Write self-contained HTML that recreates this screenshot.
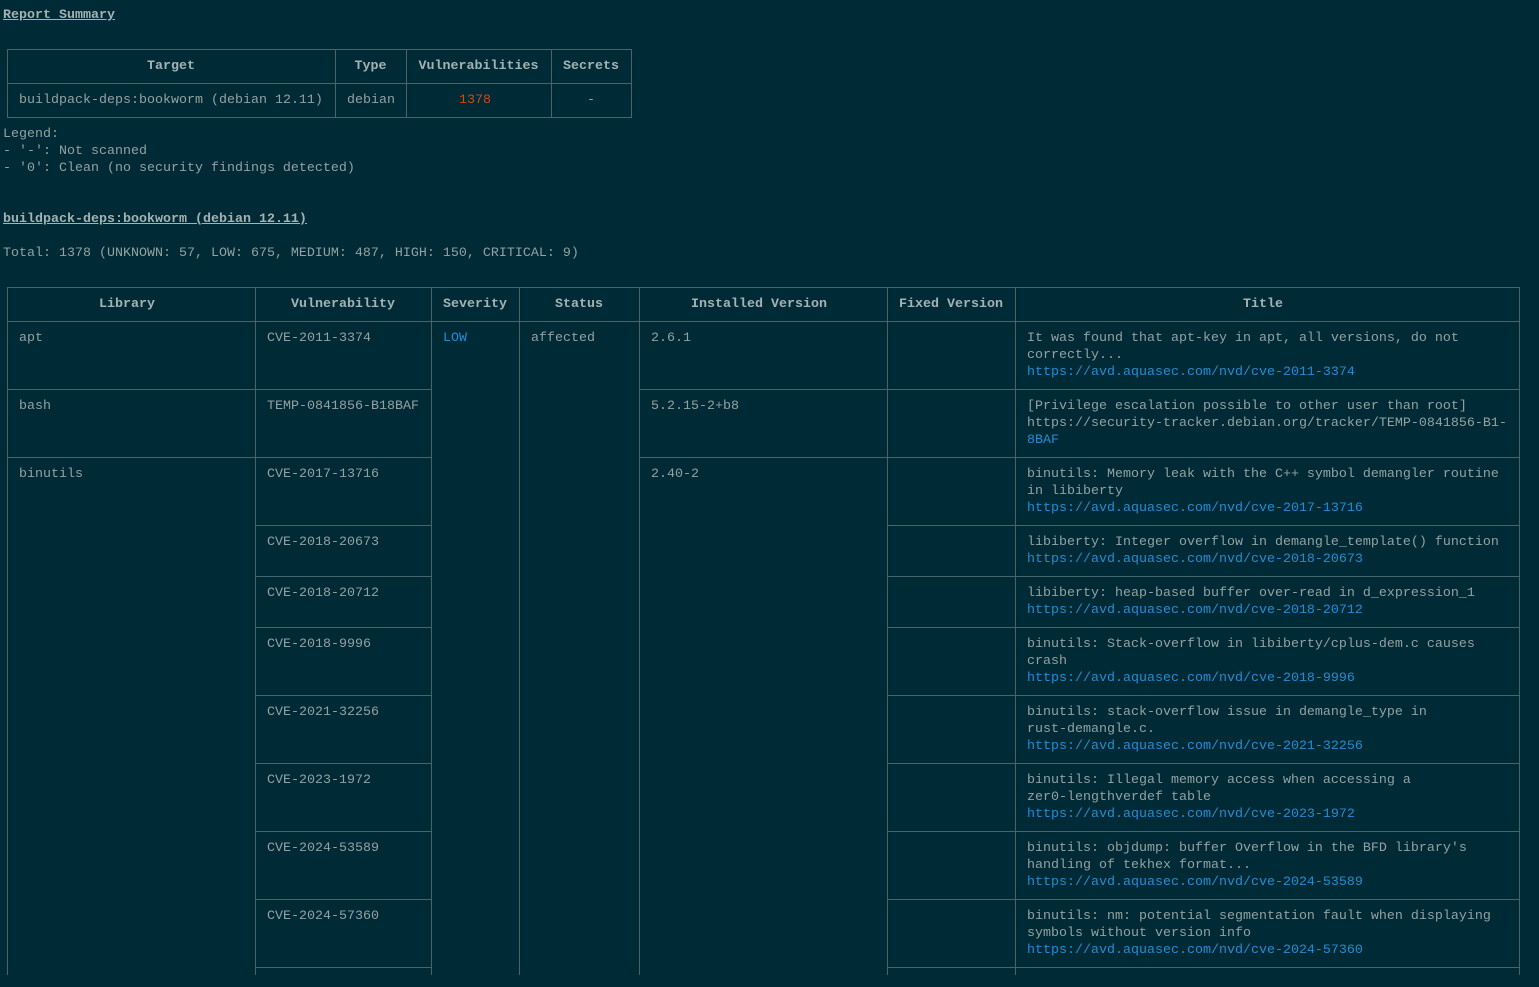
<!DOCTYPE html>
<html><head><meta charset="utf-8"><style>
html,body{margin:0;padding:0;background:#002b36;}
body{width:1539px;height:987px;position:relative;overflow:hidden;font-family:"Liberation Mono","DejaVu Sans Mono",monospace;font-size:13.33px;color:#93a1a1;}
.t{position:absolute;line-height:17px;white-space:pre;}
.b{font-weight:bold;color:#a3b3b3;}
.u{text-decoration:underline;}
.c{text-align:center;}
.l{color:#268bd2;}
.o{color:#cb4b16;}
.v{position:absolute;width:1px;background:#46666d;}
.h{position:absolute;height:1px;background:#46666d;}
</style></head><body>
<div class="t b u" style="left:3px;top:7px">Report Summary</div>

<div class="h" style="left:7px;top:49px;width:625px"></div>
<div class="h" style="left:7px;top:83px;width:625px"></div>
<div class="h" style="left:7px;top:117px;width:625px"></div>
<div class="v" style="left:7px;top:49px;height:69px"></div>
<div class="v" style="left:335px;top:49px;height:69px"></div>
<div class="v" style="left:406px;top:49px;height:69px"></div>
<div class="v" style="left:551px;top:49px;height:69px"></div>
<div class="v" style="left:631px;top:49px;height:69px"></div>
<div class="t b c" style="left:7px;width:328px;top:58px">Target</div>
<div class="t b c" style="left:335px;width:71px;top:58px">Type</div>
<div class="t b c" style="left:406px;width:145px;top:58px">Vulnerabilities</div>
<div class="t b c" style="left:551px;width:80px;top:58px">Secrets</div>
<div class="t" style="left:19px;top:92px">buildpack-deps:bookworm (debian 12.11)</div>
<div class="t" style="left:347px;top:92px">debian</div>
<div class="t c o" style="left:406px;width:138px;top:92px">1378</div>
<div class="t c" style="left:551px;width:80px;top:92px">-</div>

<div class="t" style="left:3px;top:126px">Legend:
- '-': Not scanned
- '0': Clean (no security findings detected)</div>

<div class="t b u" style="left:3px;top:211px">buildpack-deps:bookworm (debian 12.11)</div>
<div class="t" style="left:3px;top:245px">Total: 1378 (UNKNOWN: 57, LOW: 675, MEDIUM: 487, HIGH: 150, CRITICAL: 9)</div>

<div class="v" style="left:7px;top:287px;height:688px"></div>
<div class="v" style="left:255px;top:287px;height:688px"></div>
<div class="v" style="left:431px;top:287px;height:688px"></div>
<div class="v" style="left:519px;top:287px;height:688px"></div>
<div class="v" style="left:639px;top:287px;height:688px"></div>
<div class="v" style="left:887px;top:287px;height:688px"></div>
<div class="v" style="left:1015px;top:287px;height:688px"></div>
<div class="v" style="left:1519px;top:287px;height:688px"></div>
<div class="h" style="left:7px;top:287px;width:1513px"></div>
<div class="h" style="left:7px;top:321px;width:1513px"></div>
<div class="h" style="left:7px;top:389px;width:425px"></div>
<div class="h" style="left:639px;top:389px;width:881px"></div>
<div class="h" style="left:7px;top:457px;width:425px"></div>
<div class="h" style="left:639px;top:457px;width:881px"></div>
<div class="h" style="left:255px;top:525px;width:177px"></div><div class="h" style="left:887px;top:525px;width:633px"></div>
<div class="h" style="left:255px;top:576px;width:177px"></div><div class="h" style="left:887px;top:576px;width:633px"></div>
<div class="h" style="left:255px;top:627px;width:177px"></div><div class="h" style="left:887px;top:627px;width:633px"></div>
<div class="h" style="left:255px;top:695px;width:177px"></div><div class="h" style="left:887px;top:695px;width:633px"></div>
<div class="h" style="left:255px;top:763px;width:177px"></div><div class="h" style="left:887px;top:763px;width:633px"></div>
<div class="h" style="left:255px;top:831px;width:177px"></div><div class="h" style="left:887px;top:831px;width:633px"></div>
<div class="h" style="left:255px;top:899px;width:177px"></div><div class="h" style="left:887px;top:899px;width:633px"></div>
<div class="h" style="left:255px;top:967px;width:177px"></div><div class="h" style="left:887px;top:967px;width:633px"></div>

<div class="t b c" style="left:7px;width:240px;top:296px">Library</div>
<div class="t b c" style="left:255px;width:176px;top:296px">Vulnerability</div>
<div class="t b c" style="left:431px;width:88px;top:296px">Severity</div>
<div class="t b c" style="left:519px;width:120px;top:296px">Status</div>
<div class="t b c" style="left:639px;width:240px;top:296px">Installed Version</div>
<div class="t b c" style="left:887px;width:128px;top:296px">Fixed Version</div>
<div class="t b c" style="left:1015px;width:496px;top:296px">Title</div>

<div class="t" style="left:19px;top:330px">apt</div>
<div class="t" style="left:19px;top:398px">bash</div>
<div class="t" style="left:19px;top:466px">binutils</div>
<div class="t l" style="left:443px;top:330px">LOW</div>
<div class="t" style="left:531px;top:330px">affected</div>
<div class="t" style="left:651px;top:330px">2.6.1</div>
<div class="t" style="left:651px;top:398px">5.2.15-2+b8</div>
<div class="t" style="left:651px;top:466px">2.40-2</div>

<div class="t" style="left:267px;top:330px">CVE-2011-3374</div>
<div class="t" style="left:267px;top:398px">TEMP-0841856-B18BAF</div>
<div class="t" style="left:267px;top:466px">CVE-2017-13716</div>
<div class="t" style="left:267px;top:534px">CVE-2018-20673</div>
<div class="t" style="left:267px;top:585px">CVE-2018-20712</div>
<div class="t" style="left:267px;top:636px">CVE-2018-9996</div>
<div class="t" style="left:267px;top:704px">CVE-2021-32256</div>
<div class="t" style="left:267px;top:772px">CVE-2023-1972</div>
<div class="t" style="left:267px;top:840px">CVE-2024-53589</div>
<div class="t" style="left:267px;top:908px">CVE-2024-57360</div>

<div class="t" style="left:1027px;top:330px">It was found that apt-key in apt, all versions, do not
correctly...
<span class="l">https://avd.aquasec.com/nvd/cve-2011-3374</span></div>
<div class="t" style="left:1027px;top:398px">[Privilege escalation possible to other user than root]
https://security-tracker.debian.org/tracker/TEMP-0841856-B1-
<span class="l">8BAF</span></div>
<div class="t" style="left:1027px;top:466px">binutils: Memory leak with the C++ symbol demangler routine
in libiberty
<span class="l">https://avd.aquasec.com/nvd/cve-2017-13716</span></div>
<div class="t" style="left:1027px;top:534px">libiberty: Integer overflow in demangle_template() function
<span class="l">https://avd.aquasec.com/nvd/cve-2018-20673</span></div>
<div class="t" style="left:1027px;top:585px">libiberty: heap-based buffer over-read in d_expression_1
<span class="l">https://avd.aquasec.com/nvd/cve-2018-20712</span></div>
<div class="t" style="left:1027px;top:636px">binutils: Stack-overflow in libiberty/cplus-dem.c causes
crash
<span class="l">https://avd.aquasec.com/nvd/cve-2018-9996</span></div>
<div class="t" style="left:1027px;top:704px">binutils: stack-overflow issue in demangle_type in
rust-demangle.c.
<span class="l">https://avd.aquasec.com/nvd/cve-2021-32256</span></div>
<div class="t" style="left:1027px;top:772px">binutils: Illegal memory access when accessing a
zer0-lengthverdef table
<span class="l">https://avd.aquasec.com/nvd/cve-2023-1972</span></div>
<div class="t" style="left:1027px;top:840px">binutils: objdump: buffer Overflow in the BFD library's
handling of tekhex format...
<span class="l">https://avd.aquasec.com/nvd/cve-2024-53589</span></div>
<div class="t" style="left:1027px;top:908px">binutils: nm: potential segmentation fault when displaying
symbols without version info
<span class="l">https://avd.aquasec.com/nvd/cve-2024-57360</span></div>
</body></html>
